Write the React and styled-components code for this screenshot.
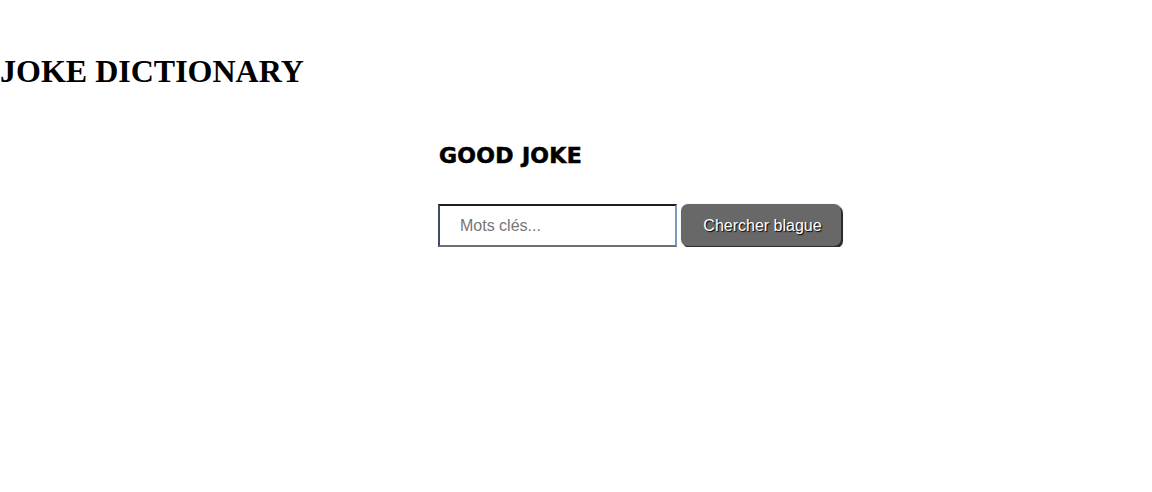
import React from "react"
import styled, { createGlobalStyle } from "styled-components"

const GlobalStyle = createGlobalStyle`
  body {
    margin: 0;
    background: #fff;
    font-family: "Liberation Serif", "Times New Roman", serif;
  }
`

export default function App() {
  return (
    <>
      <GlobalStyle />
      <Header>
        <Title>JOKE DICTIONARY</Title>
      </Header>
      <Main>
        <SubTitle>GOOD JOKE</SubTitle>
        <SearchRow>
          <SearchInput type="text" placeholder="Mots clés..." />
          <SearchButton type="button">Chercher blague</SearchButton>
        </SearchRow>
      </Main>
    </>
  )
}

const Header = styled.header`
  padding-top: 53px;
`

const Title = styled.h1`
  margin: 0;
  font-family: "Liberation Serif", "Times New Roman", serif;
  font-size: 32px;
  font-weight: bold;
  color: #000;
  line-height: 37px;
`

const Main = styled.main`
  padding: 51px 0 0 438px;
  display: flex;
  flex-direction: column;
`

const SubTitle = styled.h2`
  margin: 0 0 0 1px;
  font-family: "DejaVu Sans", "Open Sans", sans-serif;
  font-weight: bold;
  font-size: 22px;
  line-height: 30px;
  letter-spacing: 0.3px;
  color: #000;
  -webkit-text-stroke: 0.6px #000;
`

const SearchRow = styled.div`
  display: flex;
  align-items: center;
  gap: 4px;
  margin-top: 33px;
`

const SearchInput = styled.input`
  box-sizing: border-box;
  width: 239px;
  height: 43px;
  padding: 0 20px;
  border-style: solid;
  border-width: 2px;
  border-color: #1e1e1e #7b9ac2 #6f6f6f #3e4d63;
  font-family: "Liberation Sans", Arial, sans-serif;
  font-size: 16px;
  color: #333;
  outline: none;
  &::placeholder {
    color: #767676;
  }
`

const SearchButton = styled.button`
  box-sizing: border-box;
  width: 160px;
  height: 42px;
  margin-top: -1px;
  padding: 2px 0 0 3px;
  border: none;
  border-radius: 7px;
  background: #686868;
  box-shadow: 2px 2px 0 #2c2c2c, 1px 1px 2px rgba(0, 0, 0, 0.5);
  color: #fff;
  font-family: "Liberation Sans", Arial, sans-serif;
  font-size: 16px;
  text-shadow: 1px 1px 1px #000;
  cursor: pointer;
`
